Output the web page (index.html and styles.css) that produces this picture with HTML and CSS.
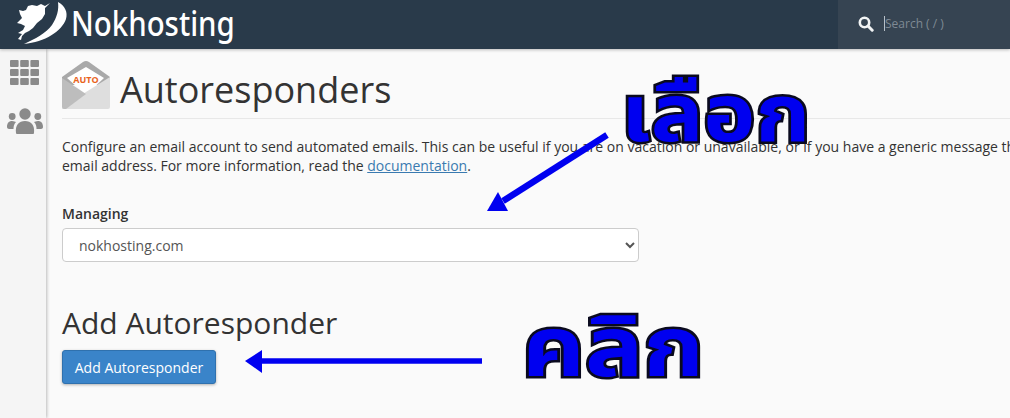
FILE: index.html
```html
<!DOCTYPE html>
<html lang="en">
<head>
<meta charset="utf-8">
<title>Autoresponders</title>
<link rel="stylesheet" href="styles.css">
</head>
<body>
<header class="topbar">
  <a class="brand">
    <svg class="brand-mark" viewBox="0 0 52 44" width="52" height="44" aria-hidden="true">
      <path fill="#fff" d="M0 22 L5 17 L3 13 L2 9 L6 10 L9 9 L11 5 L15 4 L20 5 L24 3 L28 5 L33 2 L28 7 L28 13 L25 18 L20 22 L16 27 L12 30 L8 32 L5 35 L4 39 L1 38 L5 33 L1 32 L6 29 L8 25 L4 23 Z"/>
      <path fill="#fff" d="M41 1 C48 5 51 11 49 18 C45 30 28 41 7 43 C18 38 29 32 35 24 C40 16 42 9 41 1 Z"/>
    </svg>
    <span class="brand-name">Nokhosting</span>
  </a>
  <div class="search">
    <svg class="search-icon" viewBox="0 0 16 16" width="16" height="16" aria-hidden="true">
      <circle cx="6.500" cy="6.500" r="4.700" fill="none" stroke="#f2f4f5" stroke-width="2.600"/>
      <path d="M10 10 L14.200 14.200" stroke="#f2f4f5" stroke-width="3" stroke-linecap="round"/>
    </svg>
    <span class="caret"></span>
    <span class="search-text">Search ( / )</span>
  </div>
</header>
<div class="shell">
  <nav class="rail">
    <svg viewBox="0 0 29 25" width="29" height="25" aria-hidden="true">
      <g fill="#8a8a8a">
        <rect x="0" y="0" width="8.600" height="7" rx="1"/><rect x="10.200" y="0" width="8.600" height="7" rx="1"/><rect x="20.400" y="0" width="8.600" height="7" rx="1"/>
        <rect x="0" y="9" width="8.600" height="7" rx="1"/><rect x="10.200" y="9" width="8.600" height="7" rx="1"/><rect x="20.400" y="9" width="8.600" height="7" rx="1"/>
        <rect x="0" y="18" width="8.600" height="7" rx="1"/><rect x="10.200" y="18" width="8.600" height="7" rx="1"/><rect x="20.400" y="18" width="8.600" height="7" rx="1"/>
      </g>
    </svg>
    <svg viewBox="0 0 36 26" width="36" height="26" aria-hidden="true">
      <g fill="#8a8a8a">
        <circle cx="18" cy="6" r="5.700"/>
        <circle cx="5.200" cy="8.500" r="3.400"/>
        <circle cx="30.800" cy="8.500" r="3.400"/>
        <path d="M9 25 C8 17 12 13 18 13 C24 13 28 17 27 25 C27 26 26 26 25 26 L11 26 C10 26 9 26 9 25 Z"/>
        <path d="M0 19 C0 15 2 13 5 13 C7 13 8 14 9 14 C7 16 6.500 18 6.500 21 L2 21 C1 21 0 20 0 19 Z"/>
        <path d="M36 19 C36 15 34 13 31 13 C29 13 28 14 27 14 C29 16 29.500 18 29.500 21 L34 21 C35 21 36 20 36 19 Z"/>
      </g>
    </svg>
  </nav>
  <main class="content">
    <div class="page-head">
      <svg class="page-icon" viewBox="0 0 48 48" width="48" height="48" aria-hidden="true">
        <path fill="#a9a9a9" d="M0 16 L21 1 Q24 -1 27 1 L48 16 L48 24 L0 24 Z"/>
        <path fill="#fff" d="M24 6 L42 17 L24 34 L5 17 Z"/>
        <path fill="#dedede" d="M0 47 L24 31 L48 16 L48 46 Q48 48 46 48 L2 48 Q0 48 0 47 Z"/>
        <path fill="#bdbdbd" d="M0 17 L24 33 L4 48 L2 48 Q0 48 0 46 Z"/>
        <text class="auto-label" x="24" y="22" text-anchor="middle">AUTO</text>
      </svg>
      <h1 class="page-title">Autoresponders</h1>
    </div>
    <p class="intro">Configure an email account to send automated emails. This can be useful if you are on vacation or unavailable, or if you have a generic message that you want to send from an<br>email address. For more information, read the <a class="doc-link">documentation</a>.</p>
    <label class="field-label" for="managing">Managing</label>
    <select class="field-select" id="managing">
      <option>nokhosting.com</option>
    </select>
    <h2 class="section-title">Add Autoresponder</h2>
    <button class="primary-btn" type="button">Add Autoresponder</button>
  </main>
</div>

<svg class="arrows" viewBox="0 0 1010 418" width="1010" height="418" aria-hidden="true">
  <path d="M607 135 L503 201" stroke="#0000f0" stroke-width="6.500" fill="none"/>
  <path d="M487 211 L498 192 L508 211 Z" fill="#0000f0"/>
  <path d="M482 361 L258 361" stroke="#0000f0" stroke-width="5.500" fill="none"/>
  <path d="M245 361 L262 350 L262 373 Z" fill="#0000f0"/>
</svg>
<span class="callout callout-select">เลือก</span>
<span class="callout callout-click">คลิก</span>
</body>
</html>
```
FILE: styles.css
```css
* { box-sizing: border-box; }
html, body { margin: 0; height: 100%; }
body {
  width: 1010px;
  height: 418px;
  overflow: hidden;
  position: relative;
  background: #fafafa;
  color: #333;
  font-family: "Open Sans", "Noto Sans", sans-serif;
  font-size: 14px;
  line-height: 20px;
}
.topbar {
  position: relative;
  z-index: 2;
  height: 49px;
  background: #293a4a;
  display: flex;
  justify-content: space-between;
  box-shadow: 0 1px 3px rgba(0,0,0,.25);
}
.brand { display: flex; align-items: flex-start; padding: 1px 0 0 17px; }
.brand-mark { display: block; }
.brand-name {
  display: inline-block;
  color: #fff;
  font-family: "Noto Sans", sans-serif;
  font-size: 35px;
  font-weight: 500;
  line-height: 44px;
  margin-left: 2px;
  transform: scaleX(.84);
  transform-origin: 0 50%;
}
.search {
  width: 172px;
  background: #364452;
  display: flex;
  align-items: center;
  padding: 0 0 2px 20px;
}
.search-icon { display: block; }
.caret { width: 1px; height: 15px; background: #b7c0c8; margin-left: 10px; }
.search-text { color: #7f8a94; font-size: 12px; margin-left: 0; }
.shell { display: flex; height: 369px; }
.rail {
  width: 46px;
  flex: none;
  background: #f5f5f5;
  box-shadow: 1px 0 3px rgba(0,0,0,.25);
  display: flex;
  flex-direction: column;
  align-items: center;
  gap: 23px;
  padding: 11px 0 0 3px;
}
.content { flex: 1; min-width: 0; padding: 12px 0 0 16px; overflow: hidden; }
.page-head {
  display: flex;
  align-items: flex-start;
  gap: 10px;
  height: 58px;
  border-bottom: 1px solid #e8e8e8;
}
.page-icon { display: block; flex: none; }
.auto-label { font: 700 9px "Open Sans", sans-serif; fill: #e8641e; }
.page-title {
  margin: 0;
  font-size: 36px;
  font-weight: 400;
  line-height: 58px;
  color: #333;
  white-space: nowrap;
}
.intro { margin: 18px 0 0; line-height: 19px; white-space: nowrap; overflow: hidden; }
.doc-link { color: #3a7ab0; text-decoration: underline; }
.field-label { display: block; margin-top: 29px; font-weight: 600; }
.field-select {
  display: block;
  width: 577px;
  height: 34px;
  margin-top: 4px;
  padding: 0 12px;
  background: #fff;
  border: 1px solid #ccc;
  border-radius: 4px;
  color: #555;
  font: 14px "Open Sans", sans-serif;
}
.section-title {
  margin: 41px 0 0;
  font-size: 30px;
  font-weight: 400;
  line-height: 40px;
}
.primary-btn {
  display: block;
  width: 154px;
  height: 34px;
  margin-top: 7px;
  padding: 0;
  background: #3a84c9;
  border: 1px solid #2f71ae;
  border-radius: 3px;
  color: #fff;
  font: 14px "Open Sans", sans-serif;
  box-shadow: 0 1px 3px rgba(0,0,0,.3);
}
.arrows { position: absolute; left: 0; top: 0; z-index: 3; }
.callout {
  position: absolute;
  z-index: 4;
  color: #0000f0;
  font-family: "Noto Sans", "Noto Sans Thai", "Noto Sans CJK SC", sans-serif;
  font-weight: 700;
  line-height: 1;
  white-space: nowrap;
  -webkit-text-stroke: 5px #0a0a1e;
  paint-order: stroke fill;
  transform-origin: 0 0;
}
.callout-select { left: 621px; top: 70px; font-size: 80px; transform: scaleX(1.1); }
.callout-click { left: 522px; top: 302px; font-size: 84px; transform: scaleX(1.16); }
```
